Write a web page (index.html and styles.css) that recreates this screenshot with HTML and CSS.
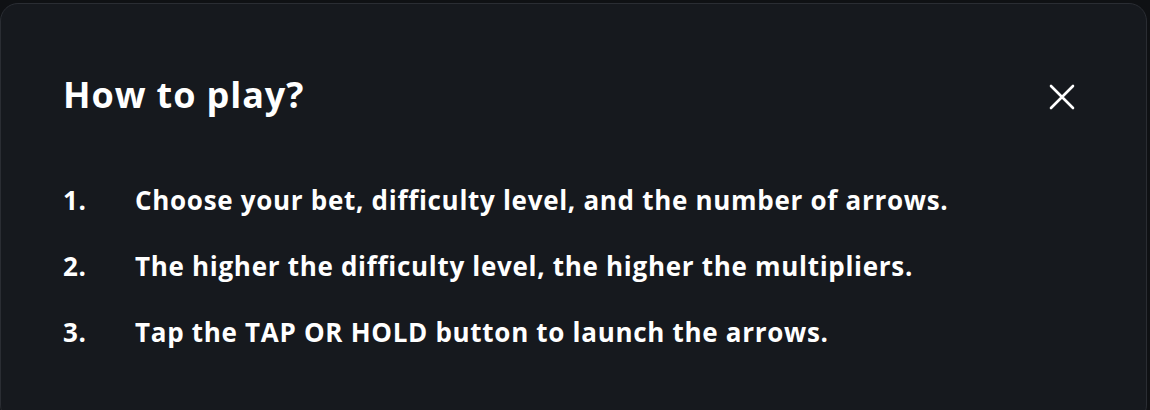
FILE: index.html
```html
<!DOCTYPE html>
<html lang="en">
  <head>
    <meta charset="UTF-8" />
    <meta name="viewport" content="width=device-width, initial-scale=1.0" />
    <title>How to play?</title>
    <link rel="stylesheet" href="styles.css">
  </head>
  <body>
    <div class="modal">
      <div class="modal-header">
        <h2>How to play?</h2>
        <button class="close-btn" aria-label="Close">
          <svg width="28" height="28" viewBox="0 0 28 28">
            <path d="M3 3 L25 25 M25 3 L3 25" stroke="#fff" stroke-width="2.6" stroke-linecap="round" fill="none" />
          </svg>
        </button>
      </div>

      <ol class="rules">
        <li><span class="num">1.</span><span>Choose your bet, difficulty level, and the number of arrows.</span></li>
        <li><span class="num">2.</span><span>The higher the difficulty level, the higher the multipliers.</span></li>
        <li><span class="num">3.</span><span>Tap the TAP OR HOLD button to launch the arrows.</span></li>
      </ol>
    </div>
  </body>
</html>
```

FILE: styles.css
```css
body {
  margin: 0;
  padding: 0;
  background-color: #0f1114;
  font-family: "Open Sans", "DejaVu Sans", sans-serif;
  color: #fff;
  overflow: hidden;
}

.modal {
  box-sizing: border-box;
  margin-top: 3px;
  width: 1147px;
  height: 420px;
  background-color: #16191e;
  border: 1px solid #2a2d33;
  border-radius: 18px;
  padding: 67px 70px 0 62px;
}

.modal-header {
  display: flex;
  justify-content: space-between;
  align-items: center;
}

.modal-header h2 {
  margin: 0;
  font-size: 36px;
  font-weight: 700;
  letter-spacing: 0.9px;
  line-height: 48px;
}

.close-btn {
  background: none;
  border: none;
  padding: 0;
  margin-top: 3px;
  cursor: pointer;
  display: flex;
}

.rules {
  list-style: none;
  margin: 64px 0 0;
  padding: 0;
}

.rules li {
  display: flex;
  font-size: 26px;
  font-weight: 700;
  letter-spacing: 0.7px;
  line-height: 34px;
  margin-bottom: 32px;
}

.rules .num {
  width: 72px;
  flex-shrink: 0;
}
```
